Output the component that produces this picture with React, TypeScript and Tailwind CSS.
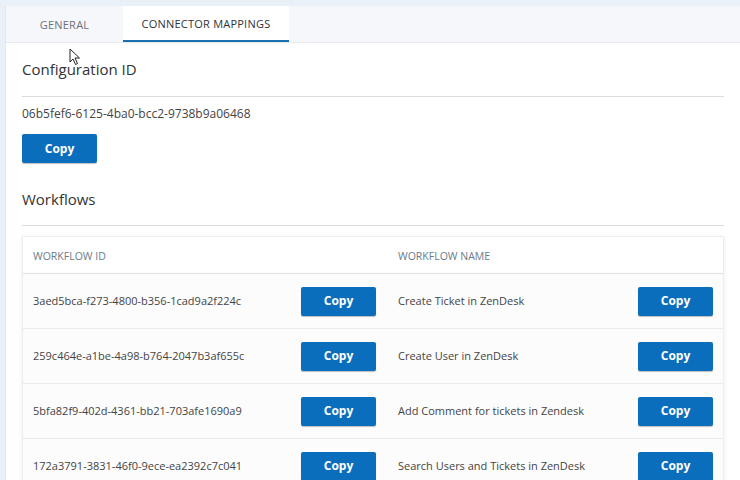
import React from 'react';

const workflows = [
    { id: '3aed5bca-f273-4800-b356-1cad9a2f224c', name: 'Create Ticket in ZenDesk' },
    { id: '259c464e-a1be-4a98-b764-2047b3af655c', name: 'Create User in ZenDesk' },
    { id: '5bfa82f9-402d-4361-bb21-703afe1690a9', name: 'Add Comment for tickets in Zendesk' },
    { id: '172a3791-3831-46f0-9ece-ea2392c7c041', name: 'Search Users and Tickets in ZenDesk' },
];

function CopyButton({ className = '' }: { className?: string }) {
    return (
        <button
            className={`w-[75px] h-[29px] bg-[#0a6ebd] text-white text-[12px] font-bold rounded-[2px] shadow-[0_1px_1px_rgba(0,0,0,0.25)] ${className}`}
        >
            Copy
        </button>
    );
}

export default function App() {
    return (
        <div
            className="relative w-[740px] h-[480px] overflow-hidden bg-[#eaf0f7] pt-[6px] pl-[5px]"
            style={{ fontFamily: '"Open Sans", "Noto Sans", sans-serif' }}
        >
            <div className="h-full bg-white border-l border-[#e3e8ef]">
                {/* tabs */}
                <div className="flex h-[37px] bg-[#f5f7fa] border-b border-[#e6eaef]">
                    <div className="w-[117px] flex items-center justify-center pt-[2px] text-[11px] text-[#6d727a] tracking-[0.02em]">
                        GENERAL
                    </div>
                    <div className="w-[166px] flex items-center justify-center pt-[2px] text-[11px] font-medium text-[#2e3338] bg-white border-b-2 border-[#1c6fae] tracking-[0.02em]">
                        CONNECTOR MAPPINGS
                    </div>
                </div>

                <div className="px-[16px]">
                    {/* configuration */}
                    <h2 className="mt-[14px] text-[15px] leading-[24px] text-[#333]">Configuration ID</h2>
                    <div className="mt-[15px] border-t border-[#d9dcdf]" />
                    <p className="mt-[7px] text-[12px] leading-[20px] text-[#444]">
                        06b5fef6-6125-4ba0-bcc2-9738b9a06468
                    </p>
                    <CopyButton className="mt-[10px] h-[28px]" />

                    {/* workflows */}
                    <h2 className="mt-[24px] text-[15px] leading-[24px] text-[#333]">Workflows</h2>
                    <div className="mt-[14px] border-t border-[#d9dcdf]" />

                    <div className="mt-[10px] bg-white border border-[#eceef0] shadow-[0_1px_4px_rgba(0,0,0,0.08)]">
                        <div className="grid grid-cols-[268px_97px_240px_75px] items-center h-[37px] pt-[3px] px-[10px] border-b border-[#dfe2e5] text-[10.5px] text-[#6a7b89]">
                            <span>WORKFLOW ID</span>
                            <span />
                            <span>WORKFLOW NAME</span>
                            <span />
                        </div>
                        {workflows.map((w) => (
                            <div
                                key={w.id}
                                className="grid grid-cols-[268px_97px_240px_75px] items-center h-[55px] px-[10px] border-b border-[#e8eaec] bg-[#fcfcfc] text-[11px] text-[#444]"
                            >
                                <span>{w.id}</span>
                                <CopyButton />
                                <span>{w.name}</span>
                                <CopyButton />
                            </div>
                        ))}
                    </div>
                </div>
            </div>

            {/* mouse pointer */}
            <svg className="absolute left-[69px] top-[48px]" width="12" height="18" viewBox="0 0 12 18">
                <path d="M1 1 L1 14 L4 11 L6.5 16.5 L8.5 15.5 L6 10 L10.5 10 Z" fill="white" stroke="#222" strokeWidth="1" strokeLinejoin="round" />
            </svg>
        </div>
    );
}
